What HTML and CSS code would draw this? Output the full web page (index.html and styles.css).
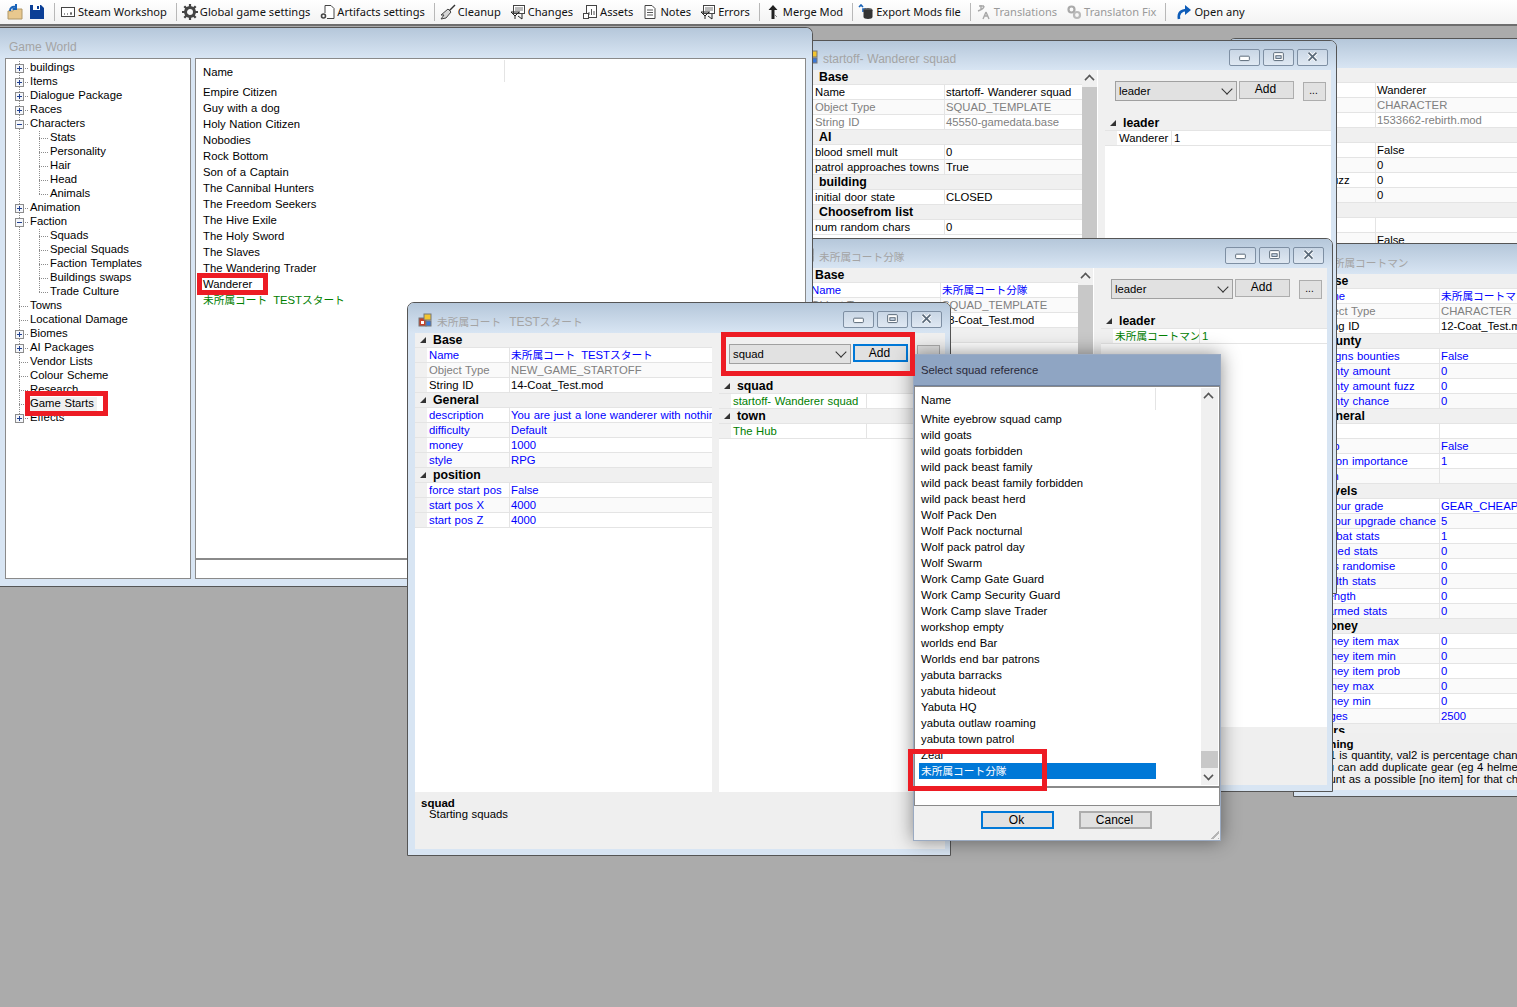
FILE: index.html
```html
<!DOCTYPE html>
<html lang="en">
<head>
    <meta charset="UTF-8">
    <title>Game World</title>
    <link rel="stylesheet" href="styles.css">
</head>
<body>
    <svg class="defs" width="0" height="0">
        <symbol id="i-min" viewBox="0 0 31 17"><rect x="10" y="7" width="11" height="5" rx="1" fill="#fff" stroke="#4a5a6a"/></symbol>
        <symbol id="i-max" viewBox="0 0 31 17"><rect x="10" y="3" width="11" height="9" rx="1" fill="#fff" stroke="#4a5a6a"/><rect x="12.5" y="6.5" width="6" height="3" fill="#c7d5e5" stroke="#4a5a6a"/></symbol>
        <symbol id="i-close" viewBox="0 0 31 17"><path d="M11 3l9 9M20 3l-9 9" stroke="#fff" stroke-width="4"/><path d="M11 3l9 9M20 3l-9 9" stroke="#5a6a7a" stroke-width="2"/></symbol>
        <symbol id="i-app" viewBox="0 0 14 14"><rect x="1" y="5" width="7" height="8" fill="#c8402a" stroke="#777"/><rect x="6" y="1" width="7" height="6" fill="#f2c530" stroke="#777"/><rect x="8" y="8" width="5" height="5" fill="#3a78d8" stroke="#777"/><rect x="3" y="8" width="3" height="3" fill="#fff"/></symbol>
        <symbol id="i-net" viewBox="0 0 16 16"><rect x="3.5" y="1.5" width="11" height="8" fill="#fff" stroke="#444"/><path d="M5 4h8M5 6h8" stroke="#777"/><path d="M1 8h9M1 8l4 4 4-4M5 12v3M8 12l4 3M12 10v5" stroke="#222" fill="none"/></symbol>
        <symbol id="i-tick" viewBox="0 0 9 9"><rect x=".5" y=".5" width="8" height="8" fill="#f4f6fa" stroke="#8c8c8c"/></symbol>
    </svg>

    <header class="toolbar">
        <svg class="tb-icon" viewBox="0 0 16 16"><path d="M1 7h5l1-2h8v10H1z" fill="#e8c88e" stroke="#b09868"/><path d="M3 7c0-3 2-5 6-4M9 0v5H5.500" fill="none" stroke="#1862b8" stroke-width="2"/></svg>
        <svg class="tb-icon save" viewBox="0 0 16 16"><path d="M1 1h11l3 3v11H1z" fill="#0b3f96"/><rect x="4" y="1" width="7" height="5" fill="#fff"/><rect x="8" y="2" width="2" height="3" fill="#0b3f96"/></svg>
        <span class="tb-sep"></span>
        <svg class="tb-icon" viewBox="0 0 16 16"><rect x="1.5" y="3.5" width="13" height="9" fill="#fff" stroke="#444"/><path d="M4 10h1M7 10h1M10 10h2M11 8v2" stroke="#333"/></svg>
        <span class="tb-text">Steam Workshop</span>
        <span class="tb-sep"></span>
        <svg class="tb-icon" viewBox="0 0 16 16"><circle cx="8" cy="8" r="4.5" fill="none" stroke="#444" stroke-width="3"/><path d="M8 0v3M8 13v3M0 8h3M13 8h3M2.3 2.3l2.1 2.1M11.6 11.6l2.1 2.1M13.7 2.3l-2.1 2.1M4.4 11.6l-2.1 2.1" stroke="#444" stroke-width="2.2"/></svg>
        <span class="tb-text">Global game settings</span>
        <svg class="tb-icon gap" viewBox="0 0 16 16"><path d="M6 9V1.5h6l3 3v10H8" fill="#fff" stroke="#444"/><circle cx="4.5" cy="12" r="2" fill="none" stroke="#444" stroke-width="1.6"/></svg>
        <span class="tb-text">Artifacts settings</span>
        <span class="tb-sep"></span>
        <svg class="tb-icon" viewBox="0 0 16 16"><path d="M15 1L9 7" stroke="#333" stroke-width="1.5"/><path d="M8 5l3 3-5 6-5 1 3-4-3 0z" fill="#d6d6d6" stroke="#444"/></svg>
        <span class="tb-text">Cleanup</span>
        <svg class="tb-icon gap"><use href="#i-net"/></svg>
        <span class="tb-text">Changes</span>
        <svg class="tb-icon gap" viewBox="0 0 16 16"><rect x="4.5" y="1.5" width="10" height="12" fill="#fff" stroke="#444"/><path d="M7 11V8M9.5 11V5M12 11V7" stroke="#555"/><rect x="1.5" y="9.5" width="5" height="5" fill="#fff" stroke="#444"/></svg>
        <span class="tb-text">Assets</span>
        <svg class="tb-icon gap" viewBox="0 0 16 16"><path d="M3 1.5h7l3 3v10H3z" fill="#fff" stroke="#444"/><path d="M5 6h6M5 8.5h6M5 11h6" stroke="#555"/></svg>
        <span class="tb-text">Notes</span>
        <svg class="tb-icon gap"><use href="#i-net"/></svg>
        <span class="tb-text">Errors</span>
        <span class="tb-sep"></span>
        <svg class="tb-icon" viewBox="0 0 16 16"><path d="M8 1l4.5 5H9.5v9H6.500V6H3.500z" fill="#222"/><path d="M9 10l3 3" stroke="#888"/></svg>
        <span class="tb-text">Merge Mod</span>
        <span class="tb-sep"></span>
        <svg class="tb-icon" viewBox="0 0 16 16"><path d="M5 8V5h3M1 3l2-2 2 2" fill="none" stroke="#1862b8" stroke-width="1.6"/><ellipse cx="10" cy="6" rx="4.500" ry="2" fill="#555"/><path d="M5.500 6v7c0 1 2 2 4.500 2s4.500-1 4.500-2V6z" fill="#333"/></svg>
        <span class="tb-text">Export Mods file</span>
        <span class="tb-sep"></span>
        <svg class="tb-icon" viewBox="0 0 16 16"><path d="M3 2h5M5 1v5M2 7c3-1 6-2 6-5M10 8l-3 7M10 8l3 7M8 12h4" fill="none" stroke="#a8a8a8" stroke-width="1.400"/></svg>
        <span class="tb-text off">Translations</span>
        <svg class="tb-icon gap" viewBox="0 0 16 16"><circle cx="5.500" cy="5.500" r="3" fill="none" stroke="#aaa" stroke-width="2.200"/><circle cx="11" cy="11" r="3" fill="none" stroke="#bbb" stroke-width="2.200"/></svg>
        <span class="tb-text off">Translaton Fix</span>
        <span class="tb-sep open"></span>
        <svg class="tb-icon" viewBox="0 0 16 16"><path d="M3 15c-1-6 2-9 8-9" fill="none" stroke="#0d5cb8" stroke-width="2.600"/><path d="M9 1l6 5-6 5z" fill="#0d5cb8"/></svg>
        <span class="tb-text">Open any</span>
    </header>

    <!-- back windows -->
    <section class="win win-e">
        <div class="win-title"><svg class="app-icon"><use href="#i-app"/></svg><span class="title-text">Wanderer</span><div class="win-btns"><svg><use href="#i-min"/></svg><svg><use href="#i-max"/></svg><svg><use href="#i-close"/></svg></div></div>
        <div class="win-body">
            <div class="pane-left">
                <div class="props">
                    <div class="group"><i></i>Base</div>
                    <div class="prop"><span class="p-name">Name</span><span class="p-val">Wanderer</span></div>
                    <div class="prop alt gray"><span class="p-name">Object Type</span><span class="p-val">CHARACTER</span></div>
                    <div class="prop gray"><span class="p-name">String ID</span><span class="p-val">1533662-rebirth.mod</span></div>
                    <div class="group"><i></i>Bounty</div>
                    <div class="prop"><span class="p-name">assigns bounties</span><span class="p-val">False</span></div>
                    <div class="prop alt"><span class="p-name">bounty amount</span><span class="p-val">0</span></div>
                    <div class="prop"><span class="p-name">bounty amount fuzz</span><span class="p-val">0</span></div>
                    <div class="prop alt"><span class="p-name">bounty chance</span><span class="p-val">0</span></div>
                    <div class="group"><i></i>General</div>
                    <div class="prop"><span class="p-name">&nbsp;</span><span class="p-val">&nbsp;</span></div>
                    <div class="prop alt"><span class="p-name">&nbsp;</span><span class="p-val">False</span></div>
                </div>
            </div>
        </div>
    </section>

    <section class="win win-d">
        <div class="win-title"><svg class="app-icon"><use href="#i-app"/></svg><span class="title-text ja">未所属コートマン</span><div class="win-btns"><svg><use href="#i-min"/></svg><svg><use href="#i-max"/></svg><svg><use href="#i-close"/></svg></div></div>
        <div class="win-body">
            <div class="pane-left">
                <div class="props blue">
                    <div class="group"><i></i>Base</div>
                    <div class="prop"><span class="p-name">Name</span><span class="p-val"><span class="ja">未所属コートマン</span></span></div>
                    <div class="prop alt gray"><span class="p-name">Object Type</span><span class="p-val">CHARACTER</span></div>
                    <div class="prop black"><span class="p-name">String ID</span><span class="p-val">12-Coat_Test.mod</span></div>
                    <div class="group"><i></i>Bounty</div>
                    <div class="prop"><span class="p-name">assigns bounties</span><span class="p-val">False</span></div>
                    <div class="prop alt"><span class="p-name">bounty amount</span><span class="p-val">0</span></div>
                    <div class="prop"><span class="p-name">bounty amount fuzz</span><span class="p-val">0</span></div>
                    <div class="prop alt"><span class="p-name">bounty chance</span><span class="p-val">0</span></div>
                    <div class="group"><i></i>General</div>
                    <div class="prop"><span class="p-name">&nbsp;</span><span class="p-val">&nbsp;</span></div>
                    <div class="prop alt"><span class="p-name">shop</span><span class="p-val">False</span></div>
                    <div class="prop"><span class="p-name">faction importance</span><span class="p-val">1</span></div>
                    <div class="prop alt"><span class="p-name">town</span><span class="p-val">&nbsp;</span></div>
                    <div class="group"><i></i>Levels</div>
                    <div class="prop"><span class="p-name">armour grade</span><span class="p-val">GEAR_CHEAP</span></div>
                    <div class="prop alt"><span class="p-name">armour upgrade chance</span><span class="p-val">5</span></div>
                    <div class="prop"><span class="p-name">combat stats</span><span class="p-val">1</span></div>
                    <div class="prop alt"><span class="p-name">ranged stats</span><span class="p-val">0</span></div>
                    <div class="prop"><span class="p-name">stats randomise</span><span class="p-val">0</span></div>
                    <div class="prop alt"><span class="p-name">stealth stats</span><span class="p-val">0</span></div>
                    <div class="prop"><span class="p-name">strength</span><span class="p-val">0</span></div>
                    <div class="prop alt"><span class="p-name">unarmed stats</span><span class="p-val">0</span></div>
                    <div class="group"><i></i>Money</div>
                    <div class="prop"><span class="p-name">money item max</span><span class="p-val">0</span></div>
                    <div class="prop alt"><span class="p-name">money item min</span><span class="p-val">0</span></div>
                    <div class="prop"><span class="p-name">money item prob</span><span class="p-val">0</span></div>
                    <div class="prop alt"><span class="p-name">money max</span><span class="p-val">0</span></div>
                    <div class="prop"><span class="p-name">money min</span><span class="p-val">0</span></div>
                    <div class="prop alt"><span class="p-name">wages</span><span class="p-val">2500</span></div>
                    <div class="group"><i></i>Vars</div>
                </div>
            </div>
        </div>
        <div class="win-desc">
            <b>Clothing</b>
            <p>val1 is quantity, val2 is percentage chance of appearing</p>
            <p>You can add duplicate gear (eg 4 helmets)</p>
            <p>Count as a possible [no item] for that chance</p>
        </div>
    </section>

    <section class="win win-b">
        <div class="win-title"><svg class="app-icon"><use href="#i-app"/></svg><span class="title-text">startoff- Wanderer squad</span><div class="win-btns"><svg><use href="#i-min"/></svg><svg><use href="#i-max"/></svg><svg><use href="#i-close"/></svg></div></div>
        <div class="win-body">
            <div class="pane-left">
                <div class="props">
                    <div class="group"><i></i>Base</div>
                    <div class="prop"><span class="p-name">Name</span><span class="p-val">startoff- Wanderer squad</span></div>
                    <div class="prop alt gray"><span class="p-name">Object Type</span><span class="p-val">SQUAD_TEMPLATE</span></div>
                    <div class="prop gray"><span class="p-name">String ID</span><span class="p-val">45550-gamedata.base</span></div>
                    <div class="group"><i></i>AI</div>
                    <div class="prop"><span class="p-name">blood smell mult</span><span class="p-val">0</span></div>
                    <div class="prop alt"><span class="p-name">patrol approaches towns</span><span class="p-val">True</span></div>
                    <div class="group"><i></i>building</div>
                    <div class="prop"><span class="p-name">initial door state</span><span class="p-val">CLOSED</span></div>
                    <div class="group"><i></i>Choosefrom list</div>
                    <div class="prop"><span class="p-name">num random chars</span><span class="p-val">0</span></div>
                </div>
                <div class="scroll-v"><span class="arrow-up"></span><span class="thumb"></span></div>
            </div>
            <div class="pane-right">
                <div class="add-bar">
                    <div class="combo">leader</div>
                    <button class="btn">Add</button>
                    <button class="btn more">...</button>
                </div>
                <div class="refs">
                    <div class="group"><i></i>leader</div>
                    <div class="ref"><span class="r-name">Wanderer</span><span class="r-val">1</span></div>
                </div>
            </div>
        </div>
    </section>

    <section class="win win-c">
        <div class="win-title"><svg class="app-icon"><use href="#i-app"/></svg><span class="title-text ja">未所属コート分隊</span><div class="win-btns"><svg><use href="#i-min"/></svg><svg><use href="#i-max"/></svg><svg><use href="#i-close"/></svg></div></div>
        <div class="win-body">
            <div class="pane-left">
                <div class="props blue">
                    <div class="group"><i></i>Base</div>
                    <div class="prop"><span class="p-name">Name</span><span class="p-val"><span class="ja">未所属コート分隊</span></span></div>
                    <div class="prop alt gray"><span class="p-name">Object Type</span><span class="p-val">SQUAD_TEMPLATE</span></div>
                    <div class="prop black"><span class="p-name">String ID</span><span class="p-val">13-Coat_Test.mod</span></div>
                    <div class="group"><i></i>AI</div>
                    <div class="prop"><span class="p-name">&nbsp;</span><span class="p-val">&nbsp;</span></div>
                </div>
                <div class="scroll-v"><span class="arrow-up"></span><span class="thumb"></span></div>
            </div>
            <div class="pane-right">
                <div class="add-bar">
                    <div class="combo">leader</div>
                    <button class="btn">Add</button>
                    <button class="btn more">...</button>
                </div>
                <div class="refs">
                    <div class="group"><i></i>leader</div>
                    <div class="ref"><span class="r-name green"><span class="ja">未所属コートマン</span></span><span class="r-val green">1</span></div>
                </div>
            </div>
        </div>
        <div class="win-desc"></div>
    </section>

    <!-- main window -->
    <section class="main-win">
        <div class="main-title">Game World</div>
        <div class="main-body">
            <nav class="tree">
                <div class="node"><svg class="exp"><use href="#i-tick"/></svg><span class="plus"></span>buildings</div>
                <div class="node"><svg class="exp"><use href="#i-tick"/></svg><span class="plus"></span>Items</div>
                <div class="node"><svg class="exp"><use href="#i-tick"/></svg><span class="plus"></span>Dialogue Package</div>
                <div class="node"><svg class="exp"><use href="#i-tick"/></svg><span class="plus"></span>Races</div>
                <div class="node"><svg class="exp"><use href="#i-tick"/></svg><span class="minus"></span>Characters</div>
                <div class="node child">Stats</div>
                <div class="node child">Personality</div>
                <div class="node child">Hair</div>
                <div class="node child">Head</div>
                <div class="node child end">Animals</div>
                <div class="node"><svg class="exp"><use href="#i-tick"/></svg><span class="plus"></span>Animation</div>
                <div class="node"><svg class="exp"><use href="#i-tick"/></svg><span class="minus"></span>Faction</div>
                <div class="node child">Squads</div>
                <div class="node child">Special Squads</div>
                <div class="node child">Faction Templates</div>
                <div class="node child">Buildings swaps</div>
                <div class="node child end">Trade Culture</div>
                <div class="node">Towns</div>
                <div class="node">Locational Damage</div>
                <div class="node"><svg class="exp"><use href="#i-tick"/></svg><span class="plus"></span>Biomes</div>
                <div class="node"><svg class="exp"><use href="#i-tick"/></svg><span class="plus"></span>AI Packages</div>
                <div class="node">Vendor Lists</div>
                <div class="node">Colour Scheme</div>
                <div class="node">Research</div>
                <div class="node"><span class="tree-sel">Game Starts</span></div>
                <div class="node last"><svg class="exp"><use href="#i-tick"/></svg><span class="plus"></span>Effects</div>
            </nav>
            <div class="list-wrap">
                <div class="list">
                    <div class="list-head"><span>Name</span></div>
                    <div class="list-row">Empire Citizen</div>
                    <div class="list-row">Guy with a dog</div>
                    <div class="list-row">Holy Nation Citizen</div>
                    <div class="list-row">Nobodies</div>
                    <div class="list-row">Rock Bottom</div>
                    <div class="list-row">Son of a Captain</div>
                    <div class="list-row">The Cannibal Hunters</div>
                    <div class="list-row">The Freedom Seekers</div>
                    <div class="list-row">The Hive Exile</div>
                    <div class="list-row">The Holy Sword</div>
                    <div class="list-row">The Slaves</div>
                    <div class="list-row">The Wandering Trader</div>
                    <div class="list-row">Wanderer</div>
                    <div class="list-row green"><span class="ja">未所属コート</span><span class="tw">TEST<span class="ja">スタート</span></span></div>
                </div>
                <div class="list-foot"></div>
            </div>
        </div>
    </section>

    <!-- front window -->
    <section class="win win-f">
        <div class="win-title"><svg class="app-icon"><use href="#i-app"/></svg><span class="title-text"><span class="ja">未所属コート</span><span class="tw">TEST<span class="ja">スタート</span></span></span><div class="win-btns"><svg><use href="#i-min"/></svg><svg><use href="#i-max"/></svg><svg><use href="#i-close"/></svg></div></div>
        <div class="win-body">
            <div class="pane-left">
                <div class="props blue">
                    <div class="group"><i></i>Base</div>
                    <div class="prop"><span class="p-name">Name</span><span class="p-val"><span class="ja">未所属コート</span><span class="tw">TEST<span class="ja">スタート</span></span></span></div>
                    <div class="prop alt gray"><span class="p-name">Object Type</span><span class="p-val">NEW_GAME_STARTOFF</span></div>
                    <div class="prop black"><span class="p-name">String ID</span><span class="p-val">14-Coat_Test.mod</span></div>
                    <div class="group"><i></i>General</div>
                    <div class="prop"><span class="p-name">description</span><span class="p-val">You are just a lone wanderer with nothing</span></div>
                    <div class="prop alt"><span class="p-name">difficulty</span><span class="p-val">Default</span></div>
                    <div class="prop"><span class="p-name">money</span><span class="p-val">1000</span></div>
                    <div class="prop alt"><span class="p-name">style</span><span class="p-val">RPG</span></div>
                    <div class="group"><i></i>position</div>
                    <div class="prop"><span class="p-name">force start pos</span><span class="p-val">False</span></div>
                    <div class="prop alt"><span class="p-name">start pos X</span><span class="p-val">4000</span></div>
                    <div class="prop"><span class="p-name">start pos Z</span><span class="p-val">4000</span></div>
                </div>
            </div>
            <div class="pane-right">
                <div class="add-bar">
                    <div class="combo">squad</div>
                    <button class="btn focus">Add</button>
                    <button class="btn more">...</button>
                </div>
                <div class="refs">
                    <div class="group"><i></i>squad</div>
                    <div class="ref"><span class="r-name green">startoff- Wanderer squad</span><span class="r-val"></span></div>
                    <div class="group"><i></i>town</div>
                    <div class="ref"><span class="r-name green">The Hub</span><span class="r-val"></span></div>
                </div>
            </div>
        </div>
        <div class="win-desc">
            <b>squad</b>
            <p>Starting squads</p>
        </div>
    </section>

    <!-- select dialog -->
    <section class="dialog">
        <div class="dlg-title">Select squad reference</div>
        <div class="dlg-list">
            <div class="dlg-rows">
                <div class="list-head"><span>Name</span></div>
                <div class="dlg-row">White eyebrow squad camp</div>
                <div class="dlg-row">wild goats</div>
                <div class="dlg-row">wild goats forbidden</div>
                <div class="dlg-row">wild pack beast family</div>
                <div class="dlg-row">wild pack beast family forbidden</div>
                <div class="dlg-row">wild pack beast herd</div>
                <div class="dlg-row">Wolf Pack Den</div>
                <div class="dlg-row">Wolf Pack nocturnal</div>
                <div class="dlg-row">Wolf pack patrol day</div>
                <div class="dlg-row">Wolf Swarm</div>
                <div class="dlg-row">Work Camp Gate Guard</div>
                <div class="dlg-row">Work Camp Security Guard</div>
                <div class="dlg-row">Work Camp slave Trader</div>
                <div class="dlg-row">workshop empty</div>
                <div class="dlg-row">worlds end Bar</div>
                <div class="dlg-row">Worlds end bar patrons</div>
                <div class="dlg-row">yabuta barracks</div>
                <div class="dlg-row">yabuta hideout</div>
                <div class="dlg-row">Yabuta HQ</div>
                <div class="dlg-row">yabuta outlaw roaming</div>
                <div class="dlg-row">yabuta town patrol</div>
                <div class="dlg-row">Zeal</div>
                <div class="dlg-row selected"><span class="ja">未所属コート分隊</span></div>
            </div>
            <div class="dlg-scroll"><span class="arrow-up"></span><span class="thumb"></span><span class="arrow-down"></span></div>
        </div>
        <div class="dlg-strip"></div>
        <div class="dlg-foot">
            <button class="btn focus">Ok</button>
            <button class="btn">Cancel</button>
            <span class="grip"></span>
        </div>
    </section>

    <!-- annotations drawn over the screenshot -->
    <div class="mark mark-tree"></div>
    <div class="mark mark-wanderer"></div>
    <div class="mark mark-add"></div>
    <div class="mark mark-row"></div>
</body>
</html>
```

FILE: styles.css
```css
* {
    box-sizing: border-box;
}
html, body {
    height: 100%;
}
body {
    margin: 0;
    position: relative;
    overflow: hidden;
    background: #ababab;
    font-family: "Liberation Sans", "Noto Sans CJK JP", sans-serif;
    font-size: 11.3px;
    word-spacing: .5px;
    color: #000;
}
.defs {
    position: absolute;
}
.ja {
    font-family: "Noto Sans CJK JP", sans-serif;
    font-size: 10.7px;
}
.tw {
    margin-left: 6px;
}
.green {
    color: #008000;
}

/* toolbar */
.toolbar {
    display: flex;
    align-items: center;
    height: 26px;
    padding: 0 0 1px 7px;
    background: linear-gradient(#ffffff, #f3f3f3);
    border-bottom: 2px solid #6e6e6e;
    font-family: "Noto Sans", sans-serif;
    font-size: 11.1px;
    word-spacing: 0;
}
.tb-icon {
    width: 16px;
    height: 16px;
    flex: none;
}
.tb-icon.save {
    margin-left: 6px;
}
.tb-icon.gap {
    margin-left: 9px;
}
.tb-text {
    margin-left: 2px;
    white-space: nowrap;
    color: #111;
}
.tb-text.off {
    color: #9a9a9a;
}
.tb-sep {
    width: 1px;
    height: 18px;
    margin: 0 5px 0 9px;
    background: #b8b8b8;
}
.tb-sep.open {
    margin-right: 10px;
}

/* desktop windows */
.win {
    position: absolute;
    display: flex;
    flex-direction: column;
    width: 544px;
    height: 554px;
    padding: 0 5px 6px 7px;
    background: #d8e5f3;
    border: 1px solid #555;
    border-radius: 7px 7px 0 0;
    --name-w: 132px;
    --title-h: 29px;
    --ref-w: 55px;
}
.win-e { left: 1228px; top: 38px; z-index: 1; --name-w: 128px; }
.win-d { left: 1293px; top: 243px; z-index: 2; --name-w: 127px; --title-h: 30px; }
.win-b { left: 793px; top: 40px; z-index: 3; }
.win-c { left: 789px; top: 238px; z-index: 4; --ref-w: 87px; }
.win-f { left: 407px; top: 302px; z-index: 6; --name-w: 83px; --ref-w: 136px; --title-h: 30px; }

.win-title {
    display: flex;
    align-items: center;
    flex: none;
    height: var(--title-h);
    margin: 0 -5px 0 -7px;
    padding: 3px 8px 0 10px;
    background: linear-gradient(#b5c7da, #d8e5f3);
    border-radius: 6px 6px 0 0;
    color: #a4a4a4;
    font-size: 12px;
    white-space: nowrap;
}
.title-text {
    margin-top: 3px;
}
.title-text.ja {
    font-size: 10.7px;
}
.title-text .tw {
    margin-left: 8px;
}
.app-icon {
    width: 14px;
    height: 14px;
    margin-right: 5px;
    flex: none;
}
.win-btns {
    display: flex;
    gap: 3px;
    margin-left: auto;
}
.win-btns svg {
    width: 31px;
    height: 17px;
    background: linear-gradient(#c9d6e5, #dfe8f2);
    border: 1px solid #7e8fa3;
    border-radius: 2px;
}
.win-body {
    display: flex;
    height: 459px;
    flex: none;
    background: #f0f0f0;
    overflow: hidden;
}
.pane-left {
    display: flex;
    flex: none;
    width: 297px;
    background: #fff;
}
.props {
    flex: 1;
    min-width: 0;
    overflow: hidden;
}
.group {
    display: flex;
    align-items: center;
    height: 15px;
    padding-left: 5px;
    background: #f0f0f0;
    border-bottom: 1px solid #e4e4e4;
    font-size: 12.3px;
    font-weight: bold;
    white-space: nowrap;
}
.group i {
    width: 0;
    height: 0;
    margin-right: 7px;
    border-style: solid;
    border-width: 0 0 6px 6px;
    border-color: transparent transparent #333 transparent;
}
.prop {
    display: flex;
    height: 15px;
    line-height: 14px;
    padding-left: 12px;
    background: linear-gradient(to right, #f0f0f0 12px, #fff 12px);
    border-bottom: 1px solid #e4e4e4;
    white-space: nowrap;
}
.prop.alt {
    background: linear-gradient(to right, #f0f0f0 12px, #fafafa 12px);
}
.p-name {
    flex: none;
    width: var(--name-w);
    padding-left: 2px;
    overflow: hidden;
    border-right: 1px solid #e4e4e4;
}
.p-val {
    flex: 1;
    padding-left: 1px;
    overflow: hidden;
}
.props.blue .prop {
    color: #0000ff;
}
.props .prop.gray {
    color: #808080;
}
.props .prop.black {
    color: #000;
}
.scroll-v {
    position: relative;
    flex: none;
    width: 15px;
    margin-right: 1px;
    padding-top: 17px;
    background: #f0f0f0;
}
.scroll-v .thumb {
    display: block;
    height: 100%;
    background: #c8c8c8;
}
.arrow-up, .arrow-down {
    position: absolute;
    left: 3px;
    top: 5px;
    width: 9px;
    height: 9px;
    border-left: 2px solid #555;
    border-top: 2px solid #555;
    transform: scale(.8) rotate(45deg);
}
.arrow-down {
    top: auto;
    bottom: 5px;
    transform: scale(.8) rotate(225deg);
}
.pane-right {
    flex: 1;
    min-width: 0;
    margin-left: 7px;
    display: flex;
    flex-direction: column;
}
.add-bar {
    display: flex;
    flex: none;
    height: 46px;
    padding: 11px 0 0 10px;
    align-items: flex-start;
}
.combo {
    position: relative;
    width: 122px;
    height: 20px;
    line-height: 19px;
    padding-left: 3px;
    background: #e1e1e1;
    border: 1px solid #a0a0a0;
}
.combo::after {
    content: "";
    position: absolute;
    right: 5px;
    top: 3px;
    width: 7px;
    height: 7px;
    border-right: 1px solid #333;
    border-bottom: 1px solid #333;
    transform: rotate(45deg);
}
.btn {
    width: 55px;
    height: 18px;
    margin: 0 0 0 2px;
    padding: 0 2px 3px 0;
    background: #e1e1e1;
    border: 1px solid #adadad;
    font: inherit;
    font-size: 12px;
    color: #000;
}
.btn.focus {
    border: 2px solid #0078d7;
}
.btn.more {
    width: 23px;
    height: 19px;
    margin: 1px 0 0 9px;
    font-size: 10px;
}
.refs {
    flex: 1;
    background: #fff;
}
.ref {
    display: flex;
    height: 15px;
    line-height: 14px;
    padding-left: 12px;
    background: linear-gradient(to right, #f0f0f0 12px, #fff 12px);
    border-bottom: 1px solid #e4e4e4;
    white-space: nowrap;
}
.r-name {
    flex: none;
    width: var(--ref-w);
    padding-left: 2px;
    overflow: hidden;
    border-right: 1px solid #e4e4e4;
}
.r-val {
    padding-left: 2px;
}
.win-desc {
    flex: 1;
    padding: 5px 0 0 6px;
    background: #efefef;
    line-height: 12px;
    overflow: hidden;
    white-space: nowrap;
}
.win-desc b {
    display: block;
    margin-bottom: -1px;
    font-size: 11.5px;
}
.win-desc p {
    margin: 0 0 0 8px;
}

/* game world window */
.main-win {
    position: absolute;
    left: 0;
    top: 27px;
    z-index: 5;
    display: flex;
    flex-direction: column;
    width: 813px;
    height: 560px;
    background: #d8e5f3;
    border: 1px solid #555;
    border-left: 0;
    border-radius: 0 7px 0 0;
}
.main-title {
    flex: none;
    height: 30px;
    padding: 12px 0 0 9px;
    line-height: 15px;
    background: linear-gradient(#b5c7da, #d8e5f3);
    border-radius: 0 6px 0 0;
    color: #a4a4a4;
    font-size: 12px;
}
.main-body {
    display: flex;
    gap: 4px;
    padding-left: 5px;
}
.tree {
    flex: none;
    width: 186px;
    height: 521px;
    padding-top: 2px;
    background: #fff;
    border: 1px solid #8a8a8a;
}
.node {
    position: relative;
    height: 14px;
    line-height: 13px;
    padding-left: 24px;
    white-space: nowrap;
    background-image:
        repeating-linear-gradient(#8c8c8c 0 1px, transparent 1px 2px),
        repeating-linear-gradient(to right, #8c8c8c 0 1px, transparent 1px 2px);
    background-size: 1px 14px, 9px 1px;
    background-position: 13px 0, 13px 7px;
    background-repeat: no-repeat;
}
.node.last {
    background-size: 1px 7px, 9px 1px;
}
.node.child {
    padding-left: 44px;
    background-image:
        repeating-linear-gradient(#8c8c8c 0 1px, transparent 1px 2px),
        repeating-linear-gradient(#8c8c8c 0 1px, transparent 1px 2px),
        repeating-linear-gradient(to right, #8c8c8c 0 1px, transparent 1px 2px);
    background-size: 1px 14px, 1px 14px, 9px 1px;
    background-position: 13px 0, 33px 0, 33px 7px;
}
.node.child.end {
    background-size: 1px 14px, 1px 7px, 9px 1px;
}
.exp {
    position: absolute;
    left: 9px;
    top: 3px;
    width: 9px;
    height: 9px;
}
.plus, .minus {
    position: absolute;
    left: 11px;
    top: 7px;
    width: 5px;
    height: 1px;
    background: #1f3f90;
}
.plus::after {
    content: "";
    position: absolute;
    left: 2px;
    top: -2px;
    width: 1px;
    height: 5px;
    background: #1f3f90;
}
.tree-sel {
    display: inline-block;
    height: 14px;
    padding-right: 3px;
    background: #f0f0f0;
}
.list-wrap {
    flex: none;
    width: 611px;
    height: 521px;
    display: flex;
    flex-direction: column;
    background: #fff;
    border: 1px solid #8a8a8a;
}
.list {
    flex: 1;
    overflow: hidden;
    border-bottom: 2px solid #8a8a8a;
}
.list-head {
    height: 25px;
    padding: 7px 0 0 7px;
    line-height: 13px;
}
.list-head span {
    display: block;
    width: 302px;
    height: 22px;
    margin-top: -6px;
    padding-top: 6px;
    border-right: 1px solid #e4e4e4;
}
.list-row {
    height: 16px;
    line-height: 16px;
    padding-left: 7px;
    white-space: nowrap;
}
.list-foot {
    flex: none;
    height: 18px;
}

/* select dialog */
.dialog {
    position: absolute;
    left: 913px;
    top: 354px;
    z-index: 7;
    display: flex;
    flex-direction: column;
    width: 308px;
    height: 487px;
    background: #f0f0f0;
    border: 1px solid #9aaac2;
    box-shadow: 0 0 18px rgba(0, 0, 0, .45);
}
.dlg-title {
    flex: none;
    height: 31px;
    line-height: 30px;
    padding-left: 7px;
    background: #8fa5c3;
    border-bottom: 1px solid #6f82a0;
    color: #2a2a3a;
}
.dlg-list {
    display: flex;
    flex: none;
    height: 402px;
    background: #fff;
    border: 1px solid #8a8a8a;
    border-bottom-width: 2px;
    overflow: hidden;
}
.dlg-rows {
    flex: 1;
    padding-left: 4px;
    overflow: hidden;
}
.dlg-rows .list-head {
    height: 24px;
    padding-left: 2px;
}
.dlg-rows .list-head span {
    width: 235px;
}
.dlg-row {
    width: 237px;
    height: 16px;
    line-height: 16px;
    padding-left: 2px;
    white-space: nowrap;
}
.dlg-row.selected {
    background: #0078d7;
    color: #fff;
}
.dlg-scroll {
    position: relative;
    flex: none;
    width: 17px;
    margin: 1px 1px 1px 0;
    background: #f0f0f0;
}
.dlg-scroll .thumb {
    position: absolute;
    left: 0;
    right: 0;
    bottom: 17px;
    height: 17px;
    background: #c8c8c8;
}
.dlg-strip {
    flex: none;
    height: 18px;
    background: #fff;
    border-right: 1px solid #8a8a8a;
    border-left: 1px solid #8a8a8a;
    border-bottom: 1px solid #8a8a8a;
}
.dlg-foot {
    position: relative;
    flex: 1;
    display: flex;
    gap: 25px;
    padding: 5px 0 0 67px;
}
.dlg-foot .btn {
    width: 73px;
    height: 18px;
    margin: 0;
    border-width: 2px;
}
.grip {
    position: absolute;
    right: 1px;
    bottom: 1px;
    width: 10px;
    height: 10px;
    background: repeating-linear-gradient(135deg, transparent 0 3px, #b5b5b5 3px 5px);
    clip-path: polygon(100% 0, 100% 100%, 0 100%);
}

/* red annotations */
.mark {
    position: absolute;
    z-index: 8;
    border: 5px solid #ed1c24;
}
.mark-tree { left: 25px; top: 391px; width: 83px; height: 25px; }
.mark-wanderer { left: 197px; top: 273px; width: 71px; height: 22px; }
.mark-add { left: 721px; top: 332px; width: 194px; height: 44px; }
.mark-row { left: 908px; top: 749px; width: 139px; height: 42px; }
```
